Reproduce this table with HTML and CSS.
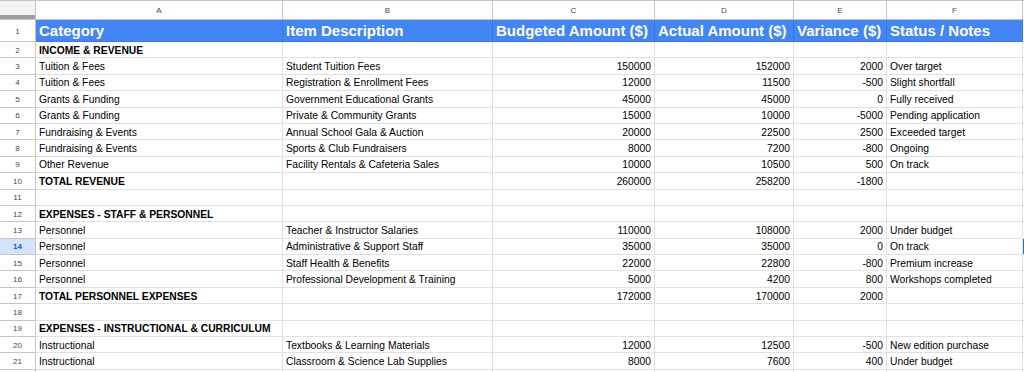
FILE: index.html
```html
<!DOCTYPE html>
<html>
<head>
<meta charset="utf-8">
<link rel="stylesheet" href="styles.css">
</head>
<body>
<div class="sheet">
  <div class="corner"><span class="freeze"></span></div>
  <div class="colhead">A</div><div class="colhead">B</div><div class="colhead">C</div><div class="colhead">D</div><div class="colhead">E</div><div class="colhead">F</div><div class="edge top"></div>

  <div class="rowhead r1">1</div>
  <div class="cell hdr">Category</div><div class="cell hdr">Item Description</div><div class="cell hdr">Budgeted Amount ($)</div><div class="cell hdr">Actual Amount ($)</div><div class="cell hdr">Variance ($)</div><div class="cell hdr">Status / Notes</div><div class="edge"></div>

  <div class="rowhead">2</div>
  <div class="cell b">INCOME &amp; REVENUE</div><div class="cell"></div><div class="cell"></div><div class="cell"></div><div class="cell"></div><div class="cell"></div><div class="edge"></div>

  <div class="rowhead">3</div>
  <div class="cell">Tuition &amp; Fees</div><div class="cell">Student Tuition Fees</div><div class="cell n">150000</div><div class="cell n">152000</div><div class="cell n">2000</div><div class="cell">Over target</div><div class="edge"></div>

  <div class="rowhead">4</div>
  <div class="cell">Tuition &amp; Fees</div><div class="cell">Registration &amp; Enrollment Fees</div><div class="cell n">12000</div><div class="cell n">11500</div><div class="cell n">-500</div><div class="cell">Slight shortfall</div><div class="edge"></div>

  <div class="rowhead">5</div>
  <div class="cell">Grants &amp; Funding</div><div class="cell">Government Educational Grants</div><div class="cell n">45000</div><div class="cell n">45000</div><div class="cell n">0</div><div class="cell">Fully received</div><div class="edge"></div>

  <div class="rowhead">6</div>
  <div class="cell">Grants &amp; Funding</div><div class="cell">Private &amp; Community Grants</div><div class="cell n">15000</div><div class="cell n">10000</div><div class="cell n">-5000</div><div class="cell">Pending application</div><div class="edge"></div>

  <div class="rowhead">7</div>
  <div class="cell">Fundraising &amp; Events</div><div class="cell">Annual School Gala &amp; Auction</div><div class="cell n">20000</div><div class="cell n">22500</div><div class="cell n">2500</div><div class="cell">Exceeded target</div><div class="edge"></div>

  <div class="rowhead">8</div>
  <div class="cell">Fundraising &amp; Events</div><div class="cell">Sports &amp; Club Fundraisers</div><div class="cell n">8000</div><div class="cell n">7200</div><div class="cell n">-800</div><div class="cell">Ongoing</div><div class="edge"></div>

  <div class="rowhead">9</div>
  <div class="cell">Other Revenue</div><div class="cell">Facility Rentals &amp; Cafeteria Sales</div><div class="cell n">10000</div><div class="cell n">10500</div><div class="cell n">500</div><div class="cell">On track</div><div class="edge"></div>

  <div class="rowhead">10</div>
  <div class="cell b">TOTAL REVENUE</div><div class="cell"></div><div class="cell n">260000</div><div class="cell n">258200</div><div class="cell n">-1800</div><div class="cell"></div><div class="edge"></div>

  <div class="rowhead">11</div>
  <div class="cell"></div><div class="cell"></div><div class="cell"></div><div class="cell"></div><div class="cell"></div><div class="cell"></div><div class="edge"></div>

  <div class="rowhead">12</div>
  <div class="cell b">EXPENSES - STAFF &amp; PERSONNEL</div><div class="cell"></div><div class="cell"></div><div class="cell"></div><div class="cell"></div><div class="cell"></div><div class="edge"></div>

  <div class="rowhead">13</div>
  <div class="cell">Personnel</div><div class="cell">Teacher &amp; Instructor Salaries</div><div class="cell n">110000</div><div class="cell n">108000</div><div class="cell n">2000</div><div class="cell">Under budget</div><div class="edge"></div>

  <div class="rowhead sel">14</div>
  <div class="cell">Personnel</div><div class="cell">Administrative &amp; Support Staff</div><div class="cell n">35000</div><div class="cell n">35000</div><div class="cell n">0</div><div class="cell">On track</div><div class="edge selcell"></div>

  <div class="rowhead">15</div>
  <div class="cell">Personnel</div><div class="cell">Staff Health &amp; Benefits</div><div class="cell n">22000</div><div class="cell n">22800</div><div class="cell n">-800</div><div class="cell">Premium increase</div><div class="edge"></div>

  <div class="rowhead">16</div>
  <div class="cell">Personnel</div><div class="cell">Professional Development &amp; Training</div><div class="cell n">5000</div><div class="cell n">4200</div><div class="cell n">800</div><div class="cell">Workshops completed</div><div class="edge"></div>

  <div class="rowhead">17</div>
  <div class="cell b">TOTAL PERSONNEL EXPENSES</div><div class="cell"></div><div class="cell n">172000</div><div class="cell n">170000</div><div class="cell n">2000</div><div class="cell"></div><div class="edge"></div>

  <div class="rowhead">18</div>
  <div class="cell"></div><div class="cell"></div><div class="cell"></div><div class="cell"></div><div class="cell"></div><div class="cell"></div><div class="edge"></div>

  <div class="rowhead">19</div>
  <div class="cell b">EXPENSES - INSTRUCTIONAL &amp; CURRICULUM</div><div class="cell"></div><div class="cell"></div><div class="cell"></div><div class="cell"></div><div class="cell"></div><div class="edge"></div>

  <div class="rowhead">20</div>
  <div class="cell">Instructional</div><div class="cell">Textbooks &amp; Learning Materials</div><div class="cell n">12000</div><div class="cell n">12500</div><div class="cell n">-500</div><div class="cell">New edition purchase</div><div class="edge"></div>

  <div class="rowhead">21</div>
  <div class="cell">Instructional</div><div class="cell">Classroom &amp; Science Lab Supplies</div><div class="cell n">8000</div><div class="cell n">7600</div><div class="cell n">400</div><div class="cell">Under budget</div><div class="edge"></div>

  <div class="rowhead"></div>
  <div class="cell"></div><div class="cell"></div><div class="cell"></div><div class="cell"></div><div class="cell"></div><div class="cell"></div><div class="edge"></div>
</div>
</body>
</html>
```

FILE: styles.css
```css
html, body {
  margin: 0;
  padding: 0;
  background: #ffffff;
  overflow: hidden;
}

.sheet {
  display: grid;
  grid-template-columns: 36px 247px 210px 162px 139px 93px 136px 1fr;
  grid-template-rows: 20px 22px repeat(21, 16.4px);
  width: 1024px;
  font-family: "Liberation Sans", Arial, sans-serif;
  color: #000;
}

.sheet > div {
  box-sizing: border-box;
  overflow: hidden;
  white-space: nowrap;
}

.corner {
  position: relative;
  background: #f1f3f4;
  border-right: 1px solid #c4c7c5;
  border-bottom: 1px solid #c4c7c5;
  border-top: 1px solid #c4c7c5;
}

.freeze {
  position: absolute;
  left: 0;
  right: 0;
  bottom: 0;
  height: 4px;
  background: #9e9e9e;
}

.colhead {
  border-top: 1px solid #c4c7c5;
  border-right: 1px solid #c4c7c5;
  border-bottom: 1px solid #c4c7c5;
  font-size: 8px;
  color: #444746;
  display: flex;
  align-items: center;
  justify-content: center;
  background: #ffffff;
}

.rowhead {
  border-right: 1px solid #c4c7c5;
  border-bottom: 1px solid #c4c7c5;
  font-size: 8px;
  color: #444746;
  display: flex;
  align-items: center;
  justify-content: center;
  background: #ffffff;
  padding-top: 1px;
}

.rowhead.sel {
  background: #d3e3fd;
  color: #0b57d0;
  font-weight: bold;
}

.cell {
  border-right: 1px solid #e1e1e1;
  border-bottom: 1px solid #e1e1e1;
  font-size: 10.3px;
  padding: 1px 3px 0 3px;
  display: flex;
  align-items: center;
}

.cell.n {
  justify-content: flex-end;
}

.cell.b {
  font-weight: bold;
}

.cell.hdr {
  background: #4285f4;
  color: #ffffff;
  font-weight: bold;
  font-size: 15px;
  padding-top: 0;
  border-right-color: #3b78dc;
  border-bottom-color: #3b78dc;
}

.edge {
  border-bottom: 1px solid #e1e1e1;
}

.edge.top {
  border-top: 1px solid #c4c7c5;
  border-bottom-color: #c4c7c5;
}

.edge.selcell {
  background: #1a73e8;
}
```
